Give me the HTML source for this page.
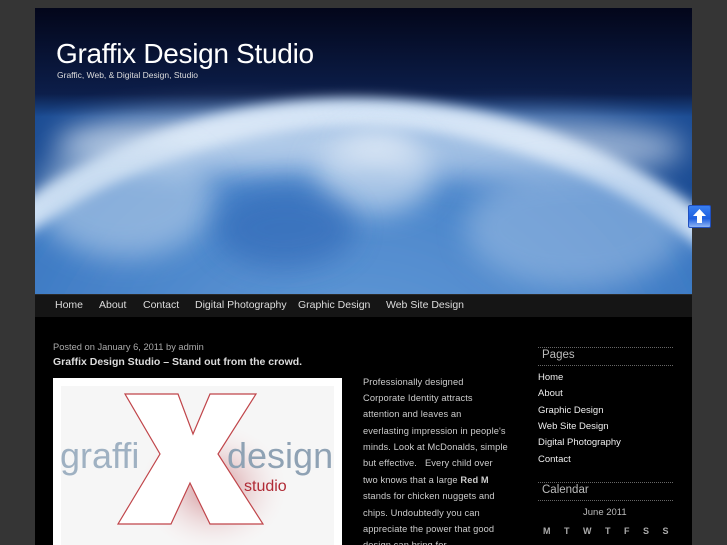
<!DOCTYPE html>
<html><head><meta charset="utf-8"><style>
body{margin:0;background:#353535;width:727px;height:545px;overflow:hidden;font-family:"Liberation Sans",sans-serif;}
#wrap{position:absolute;left:35px;top:8px;width:657px;height:537px;background:#000;overflow:hidden;}
#hdr{position:absolute;left:0;top:0;width:657px;height:286px;overflow:hidden;}
#nav{position:absolute;left:0;top:286px;width:657px;height:22px;background:#151515;border-top:1px solid #2a2a2a;}
#nav span{position:absolute;top:4px;color:#ddd;font-size:10.5px;}
.t{position:absolute;color:#fff;}
.side a{position:absolute;left:503px;color:#eee;font-size:9.5px;}
.wt{position:absolute;left:503px;width:135px;border-top:1px dotted #666;border-bottom:1px dotted #666;height:17px;color:#bbb;font-size:11.5px;}
.p{position:absolute;left:328px;color:#ccc;font-size:9.3px;letter-spacing:.1px;}
</style></head><body>
<div id="wrap">
<div id="hdr">
<svg width="657" height="286">
<defs>
<linearGradient id="sky" x1="0" y1="0" x2="0" y2="1"><stop offset="0" stop-color="#03061a"/><stop offset=".3" stop-color="#0c1e4a"/><stop offset=".38" stop-color="#1b4c94"/></linearGradient>
<radialGradient id="earth" cx=".5" cy=".3" r=".7"><stop offset="0" stop-color="#6ea3dc"/><stop offset=".5" stop-color="#3d7ac4"/><stop offset="1" stop-color="#1e55a8"/></radialGradient>
<filter id="b" x="-50%" y="-50%" width="200%" height="200%"><feGaussianBlur stdDeviation="6"/></filter>
<filter id="b2" x="-50%" y="-50%" width="200%" height="200%"><feGaussianBlur stdDeviation="14"/></filter>
</defs>
<rect width="657" height="286" fill="url(#sky)"/>
<ellipse cx="320" cy="620" rx="560" ry="530" fill="#cfe1f5" filter="url(#b)"/>
<ellipse cx="320" cy="640" rx="540" ry="520" fill="url(#earth)" filter="url(#b)"/>
<ellipse cx="200" cy="135" rx="180" ry="30" fill="#dfeaf7" opacity=".7" filter="url(#b2)"/>
<ellipse cx="480" cy="140" rx="170" ry="30" fill="#dfeaf7" opacity=".6" filter="url(#b2)"/>
<ellipse cx="90" cy="190" rx="90" ry="60" fill="#c5d9ee" opacity=".55" filter="url(#b2)"/>
<ellipse cx="340" cy="165" rx="60" ry="40" fill="#e5eef8" opacity=".6" filter="url(#b2)"/>
<ellipse cx="540" cy="220" rx="110" ry="60" fill="#a7c4e6" opacity=".5" filter="url(#b2)"/>
<ellipse cx="250" cy="220" rx="70" ry="40" fill="#2d66b5" opacity=".6" filter="url(#b2)"/>
</svg>
<div class="t" style="left:21px;top:30px;font-size:28px;letter-spacing:-.3px;">Graffix Design Studio</div>
<div class="t" style="left:22px;top:62px;font-size:8.5px;color:#ddd;">Graffic, Web, &amp; Digital Design, Studio</div>
</div>
<div id="nav">
<span style="left:20px">Home</span><span style="left:64px">About</span><span style="left:108px">Contact</span><span style="left:160px">Digital Photography</span><span style="left:263px">Graphic Design</span><span style="left:351px">Web Site Design</span>
</div>
<div style="position:absolute;left:18px;top:334px;color:#aaa;font-size:9.3px;">Posted on January 6, 2011 by admin</div>
<div style="position:absolute;left:18px;top:348px;color:#ddd;font-size:10.5px;font-weight:bold;">Graffix Design Studio – Stand out from the crowd.</div>
<div style="position:absolute;left:18px;top:370px;width:289px;height:175px;background:#fff;overflow:hidden;">
<div style="position:absolute;left:8px;top:8px;width:273px;height:170px;background:#f6f6f6;"></div>
<svg style="position:absolute;left:0;top:0" width="289" height="175">
<defs><radialGradient id="r"><stop offset="0" stop-color="#c46a70" stop-opacity=".8"/><stop offset="1" stop-color="#fff" stop-opacity="0"/></radialGradient></defs>
<ellipse cx="160" cy="110" rx="80" ry="70" fill="url(#r)"/>
<polygon points="72,16 125,16 140,56 157,16 203,16 165,76 210,146 157,146 137,105 118,146 65,146 107,76" fill="#fff" stroke="#c0454a" stroke-width="1.2"/>
<text x="7" y="90" font-family="Liberation Sans" font-size="36" fill="#9fb1c2">graffi</text>
<text x="174" y="90" font-family="Liberation Sans" font-size="36" fill="#8fa2b4">design</text>
<text x="191" y="113" font-family="Liberation Sans" font-size="16" fill="#b02a35">studio</text>
</svg></div>
<div class="p" style="top:369px">Professionally designed</div>
<div class="p" style="top:385px">Corporate Identity attracts</div>
<div class="p" style="top:401px">attention and leaves an</div>
<div class="p" style="top:418px">everlasting impression in people's</div>
<div class="p" style="top:434px">minds. Look at McDonalds, simple</div>
<div class="p" style="top:450px">but effective.&nbsp;&nbsp; Every child over</div>
<div class="p" style="top:467px">two knows that a large <b>Red M</b></div>
<div class="p" style="top:483px">stands for chicken nuggets and</div>
<div class="p" style="top:500px">chips. Undoubtedly you can</div>
<div class="p" style="top:516px">appreciate the power that good</div>
<div class="p" style="top:532px">design can bring for</div>
<div class="wt" style="top:339px"><span style="position:absolute;left:4px;top:1px">Pages</span></div>
<div class="side"><a style="top:364px">Home</a><a style="top:380px">About</a><a style="top:397px">Graphic Design</a><a style="top:413px">Web Site Design</a><a style="top:429px">Digital Photography</a><a style="top:446px">Contact</a></div>
<div class="wt" style="top:474px"><span style="position:absolute;left:4px;top:1px">Calendar</span></div>
<div style="position:absolute;left:548px;top:499px;color:#bbb;font-size:9.5px;">June 2011</div>
<div style="position:absolute;left:508px;top:518px;color:#aaa;font-size:9px;font-weight:bold;word-spacing:11px;">M T W T F S S</div>
</div>
<div style="position:absolute;left:688px;top:205px;width:21px;height:21px;background:linear-gradient(#3a7ff0,#1d5fe0 60%,#8fb5f5);border-radius:2px;border:1px solid #2050c0;">
<svg width="21" height="21"><path d="M10.5 3 L17 10 L13 10 L13 17 L8 17 L8 10 L4 10Z" fill="#fff"/></svg></div>
</body></html>
